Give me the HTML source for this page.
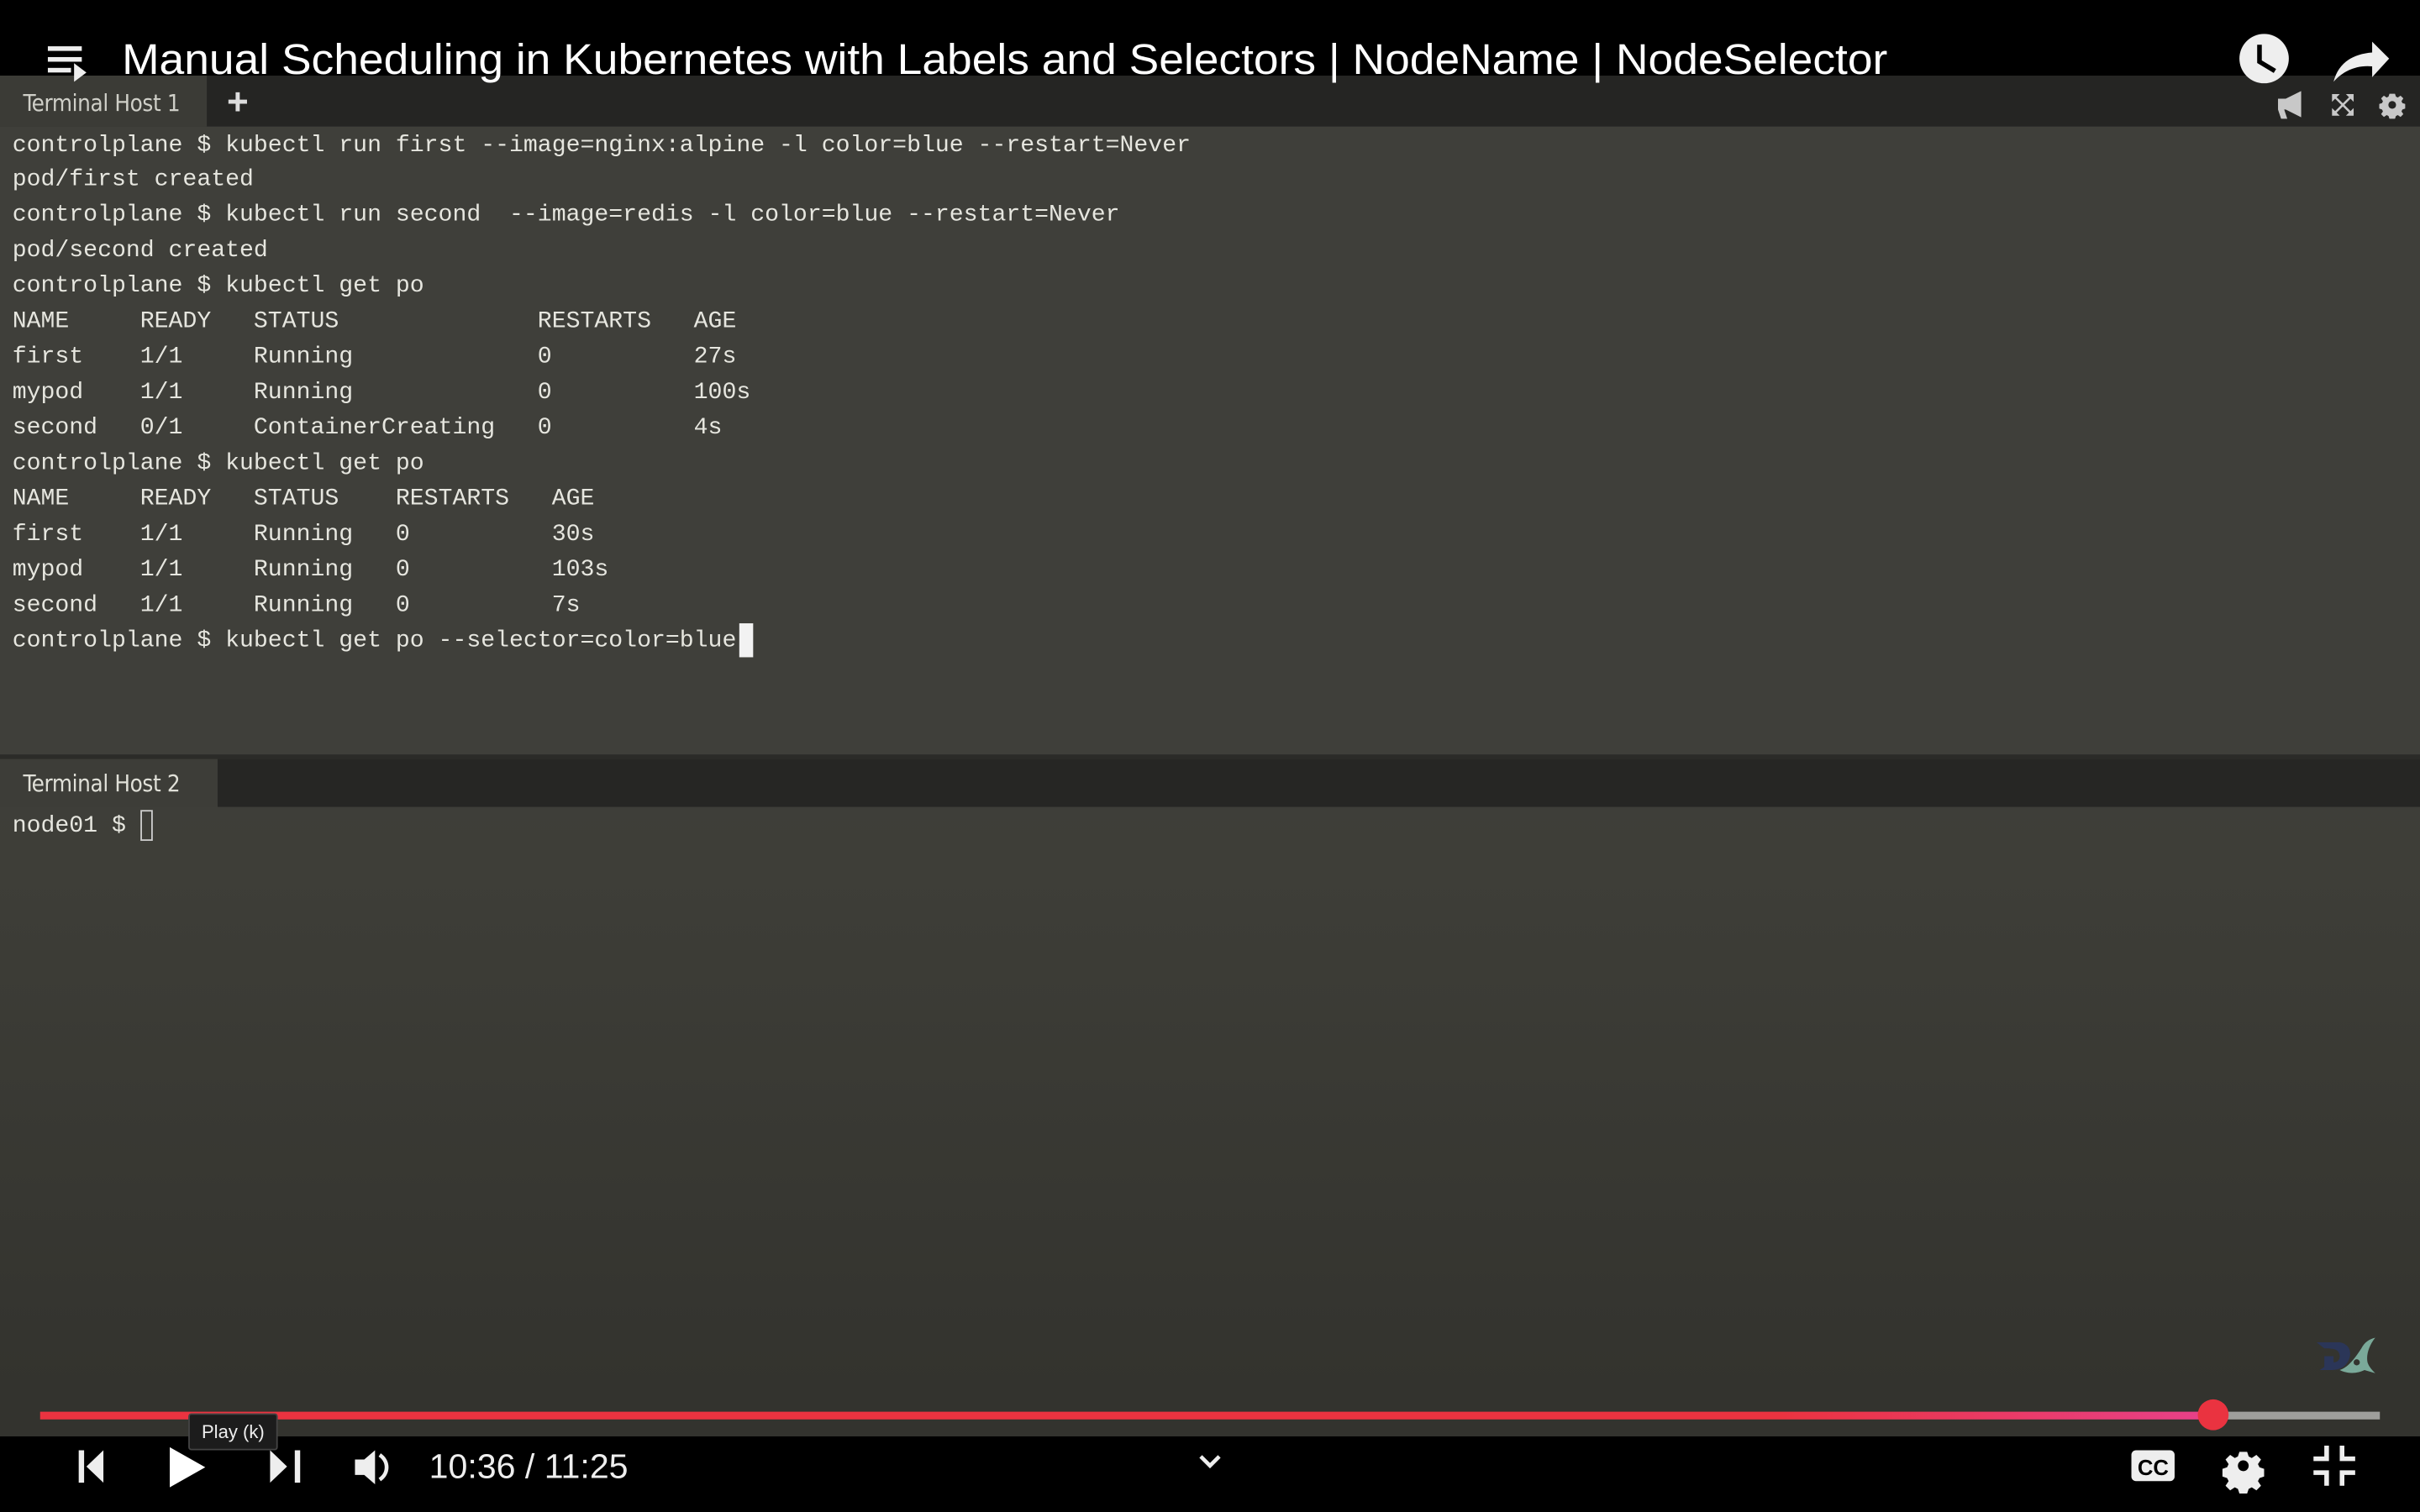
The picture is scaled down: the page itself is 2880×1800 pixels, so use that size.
<!DOCTYPE html>
<html><head><meta charset="utf-8"><style>
html,body{margin:0;padding:0;background:#000;overflow:hidden;width:2880px;height:1800px}
#s{position:absolute;left:0;top:0;width:1568px;height:980px;transform:scale(1.836735);transform-origin:0 0;overflow:hidden;
background:linear-gradient(#3f3f3a 0px,#3f3f3a 480px,#3e3e38 560px,#33332e 900px);font-family:"Liberation Sans",sans-serif}
.abs{position:absolute}
pre{margin:0;font-family:"Liberation Mono",monospace;font-size:15.33px;line-height:22.93px;color:#e6e6df;position:absolute;left:8px}
.tab{font-size:15px;font-family:'DejaVu Sans Condensed','DejaVu Sans',sans-serif;letter-spacing:-0.2px}
</style></head><body><div id="s">
<div class="abs" style="left:0;top:0;width:1568px;height:49px;background:#000"></div>
<div class="abs" style="left:0;top:49px;width:1568px;height:33px;background:#252523"></div>
<div class="abs" style="left:0;top:49px;width:134px;height:33px;background:#3b3b36"></div>
<div class="abs tab" style="left:15px;top:58px;color:#cfcfc8">Terminal Host 1</div>
<div class="abs" style="left:147px;top:53px;font-size:24px;color:#ddd;font-weight:bold">+</div>
<svg class="abs" style="left:0;top:0" width="1568" height="82">
<g fill="#eee"><rect x="31" y="30" width="22" height="3"/><rect x="31" y="37" width="22" height="3"/><rect x="31" y="44" width="15" height="3"/><path d="M48 41 L56 47 L48 53Z"/></g>
<text x="79" y="48" fill="#fff" font-size="28" font-family="Liberation Sans" textLength="1144" lengthAdjust="spacingAndGlyphs">Manual Scheduling in Kubernetes with Labels and Selectors | NodeName | NodeSelector</text>
<circle cx="1467" cy="38" r="16" fill="#eee"/><path d="M1464 29 V40 L1474 46" stroke="#000" stroke-width="3" fill="none"/>
<path d="M1512 53 C1515 41 1524 35 1537 34 L1537 27 L1548 38 L1537 50 L1537 43 C1527 42 1518 46 1512 53Z" fill="#eee"/>
<g fill="#c8c8c8"><path d="M1476 64 L1481 64 L1491 59 L1491 76 L1481 71 L1480 71 L1482 77 L1478 77 L1476 71Z"/>
<path d="M1511 61h5l-2 2 4 4 4-4-2-2h5v5l-2-2-4 4 4 4 2-2v5h-5l2-2-4-4-4 4 2 2h-5v-5l2 2 4-4-4-4-2 2z"/>
<g transform="translate(1550 68) scale(0.6) translate(-1550 -72)"><path d="M1547 60h6l1 3 2 1 3-2 3 3-2 3 1 2 3 1v5l-3 1-1 2 2 3-3 3-3-2-2 1-1 3h-6l-1-3-2-1-3 2-3-3 2-3-1-2-3-1v-5l3-1 1-2-2-3 3-3 3 2 2-1z"/></g></g>
<circle cx="1550" cy="68" r="2.5" fill="#252523"/>
</svg>
<pre style="top:82.5px">controlplane $ kubectl run first --image=nginx:alpine -l color=blue --restart=Never
pod/first created
controlplane $ kubectl run second  --image=redis -l color=blue --restart=Never
pod/second created
controlplane $ kubectl get po
NAME     READY   STATUS              RESTARTS   AGE
first    1/1     Running             0          27s
mypod    1/1     Running             0          100s
second   0/1     ContainerCreating   0          4s
controlplane $ kubectl get po
NAME     READY   STATUS    RESTARTS   AGE
first    1/1     Running   0          30s
mypod    1/1     Running   0          103s
second   1/1     Running   0          7s
controlplane $ kubectl get po --selector=color=blue</pre>
<div class="abs" style="left:479px;top:404px;width:9px;height:22px;background:#f2f2f2"></div>
<div class="abs" style="left:0;top:489px;width:1568px;height:3px;background:#2b2b28"></div>
<div class="abs" style="left:141px;top:492px;width:1427px;height:31px;background:#262624"></div>
<div class="abs" style="left:0;top:492px;width:141px;height:31px;background:#3d3d38"></div>
<div class="abs tab" style="left:15px;top:499px;color:#e0e0d8">Terminal Host 2</div>
<pre style="top:523.5px">node01 $ </pre>
<div class="abs" style="left:91px;top:525px;width:8px;height:20px;border:1.5px solid #ccc;box-sizing:border-box"></div>
<svg class="abs" style="left:1500px;top:866px" width="42" height="30"><path d="M1 4 L16 4 C22 5 24 10 22 15 C20 20 16 22 10 22 L3 22 L6 20 L6 13 L12 13 L12 17 C16 17 17 13 15 10 C13 8 10 8 6 8 Z" fill="#2b3658"/><path d="M16 22 C22 20 26 14 30 8 C32 4 35 2 39 1 C35 6 33 12 34 17 C35 20 37 22 39 24 L32 22 C28 24 22 25 16 22Z" fill="#7aa999"/><circle cx="27" cy="17" r="2" fill="#33332e"/></svg>
<div class="abs" style="left:26px;top:915px;width:1408px;height:5px;background:linear-gradient(90deg,#ea3340 0%,#ea3340 80%,#e8418a 100%)"></div>
<div class="abs" style="left:1434px;top:915px;width:108px;height:5px;background:#9e9e9b"></div>
<div class="abs" style="left:1424px;top:907px;width:20px;height:20px;border-radius:50%;background:#ea3340"></div>
<div class="abs" style="left:0;top:931px;width:1568px;height:49px;background:#000"></div>
<div class="abs" style="left:122px;top:916px;width:58px;height:24px;background:#1c1c1c;border:1px solid #444;border-radius:2px;box-sizing:border-box;color:#eee;font-size:12px;text-align:center;line-height:22px">Play (k)</div>
<svg class="abs" style="left:0;top:931px" width="1568" height="49">
<g fill="#eee">
<rect x="51" y="9" width="3.5" height="21"/><path d="M67 9 V30 L56 19.5Z"/>
<path d="M110 7 V33 L133 20Z" fill="#fff"/>
<path d="M175 9 V30 L186 19.5Z"/><rect x="191" y="9" width="3.5" height="21"/>
<path d="M230 15 H236 L243 9 V31 L236 25 H230Z"/>
<path d="M246 12 C252 16 252 24 246 28" stroke="#eee" stroke-width="2.5" fill="none"/>
<rect x="1381" y="9" width="28" height="20" rx="3"/>
<path d="M1451 13 h5 l1 3 2 1 3-2 3 3-2 3 1 2 3 1 v5 l-3 1-1 2 2 3-3 3-3-2-2 1-1 3h-5l-1-3-2-1-3 2-3-3 2-3-1-2-3-1v-5l3-1 1-2-2-3 3-3 3 2 2-1z" transform="translate(0 -3)"/>
<path d="M1506 6h3v10h-10v-3h7z M1516 6h3v7h7v3h-10z M1499 22h10v10h-3v-7h-7z M1516 22h10v3h-7v7h-3z"/>
</g>
<circle cx="1453.5" cy="19" r="3.5" fill="#000"/>
<text x="1385" y="25" font-size="14" font-weight="bold" fill="#000" font-family="Liberation Sans">CC</text>
<text x="278" y="27" fill="#eee" font-size="22" font-family="Liberation Sans" textLength="129" lengthAdjust="spacingAndGlyphs">10:36 / 11:25</text>
<path d="M778 13 L784 19 L790 13" stroke="#eee" stroke-width="2.5" fill="none"/>
</svg>
</div></body></html>
